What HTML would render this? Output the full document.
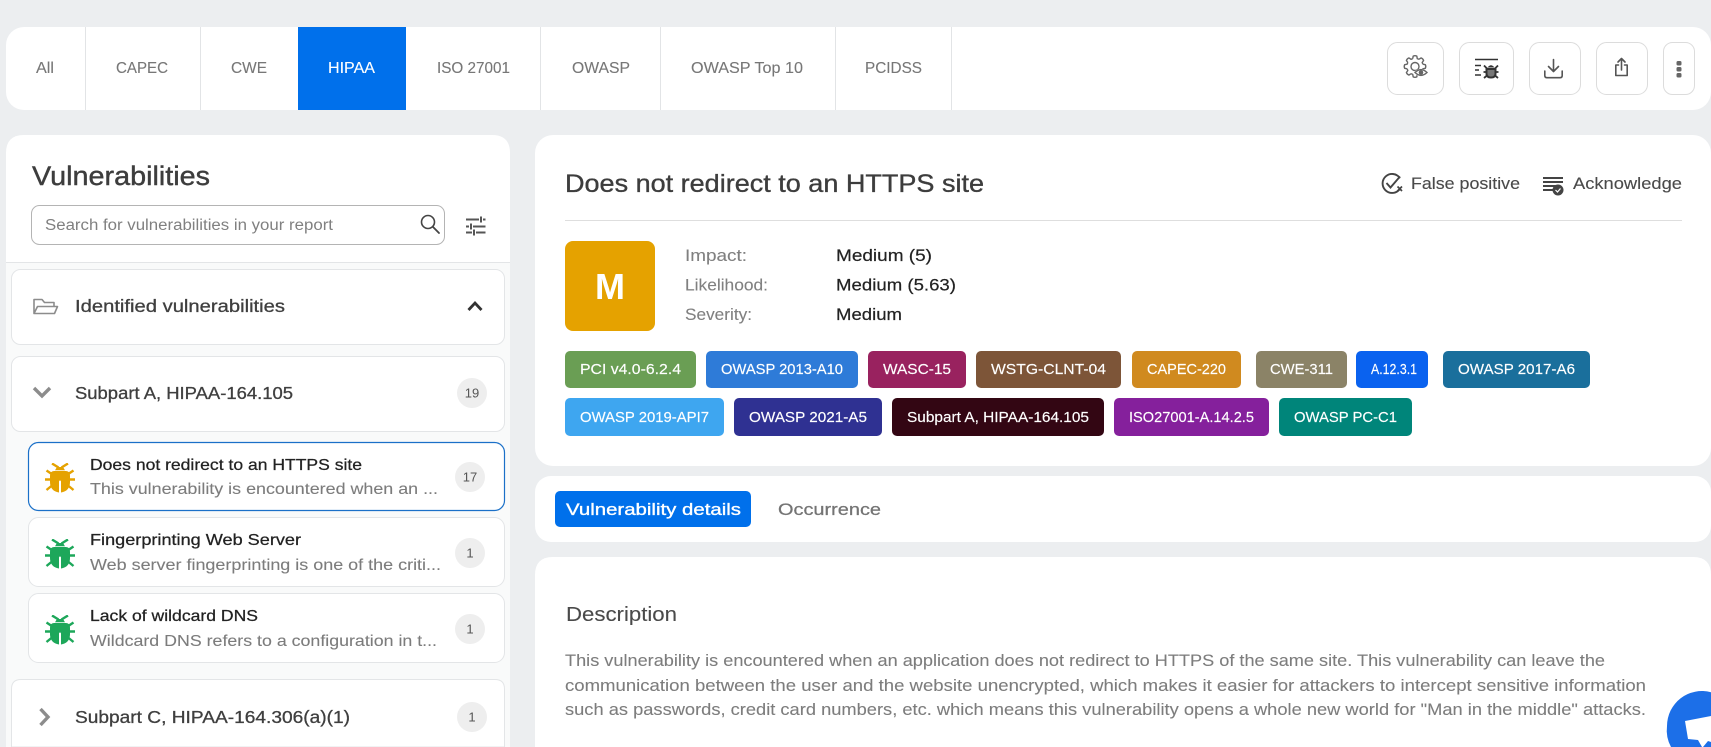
<!DOCTYPE html>
<html lang="en">
<head>
<meta charset="utf-8">
<title>Vulnerabilities</title>
<style>
html,body{margin:0;padding:0;width:1711px;height:747px;overflow:hidden;background:#eceef0}
svg{display:block;position:absolute;left:0;top:0}
text{font-family:"Liberation Sans",sans-serif;}
.tab{font-size:16px;fill:#777;stroke:#777;stroke-width:.12px}
.chip{font-size:15px;fill:#fff;stroke:#fff;stroke-width:.15px}
.lbl{font-size:16.5px;fill:#808080;stroke:#808080;stroke-width:.1px}
.val{font-size:17px;fill:#222;stroke:#222;stroke-width:.2px}
.h3{font-size:17.500px;fill:#3f3f3f;stroke:#3f3f3f;stroke-width:.3px}
.ti{font-size:16px;fill:#222;stroke:#222;stroke-width:.25px}
.de{font-size:16px;fill:#7c7c7c;stroke:#7c7c7c;stroke-width:.1px}
.bn{font-size:13px;fill:#555;text-anchor:middle}
.p{font-size:16.5px;fill:#7d7d7d;stroke:#7d7d7d;stroke-width:.1px}
.ln{fill:none;stroke:#555;stroke-width:1.6;stroke-linecap:round;stroke-linejoin:round}
</style>
</head>
<body>
<svg width="1711" height="747" viewBox="0 0 1711 747" xmlns="http://www.w3.org/2000/svg">
<defs>
<symbol id="bug" viewBox="0 0 30 30">
<path d="M7 .5 13.500 4.500M23 .5 16.500 4.500" fill="none" stroke="currentColor" stroke-width="2.400"/>
<path d="M10 7.200 12 4H18L20 7.200Z" fill="currentColor"/>
<path d="M5 13Q5 8 9 8H21Q25 8 25 13V19Q25 28 16 29.500V18.500Q16 17.500 15 17.500T14 18.500V29.500Q5 28 5 19Z" fill="currentColor"/>
<path d="M1.500 7.500 6 10.500M0 16.500H6M1.500 27 7 22.500M28.500 7.500 24 10.500M30 16.500H24M28.500 27 23 22.500" fill="none" stroke="currentColor" stroke-width="2.400"/>
</symbol>
<path id="tooth" d="M-2.260 -7.880L-1.820 -10.340Q0 -11.200 1.820 -10.340L2.260 -7.880L3.980 -7.180" fill="none" stroke="#666" stroke-width="1.400" stroke-linejoin="round"/>
</defs>

<!-- top tab bar -->
<rect x="6" y="27" width="1705" height="83" rx="18" fill="#fff"/>
<path d="M298 27H406V110H298Z" fill="#0070eb"/>
<g stroke="#e2e4e6" stroke-width="1">
<path d="M85.500 27V110M200.500 27V110M540.500 27V110M660.500 27V110M835.500 27V110M951.500 27V110"/>
</g>
<text class="tab" x="36" y="73" textLength="18" lengthAdjust="spacingAndGlyphs">All</text>
<text class="tab" x="116" y="73" textLength="52" lengthAdjust="spacingAndGlyphs">CAPEC</text>
<text class="tab" x="231" y="73" textLength="36" lengthAdjust="spacingAndGlyphs">CWE</text>
<text class="tab" x="328" y="73" textLength="47" lengthAdjust="spacingAndGlyphs" style="fill:#fff;stroke:#fff">HIPAA</text>
<text class="tab" x="437" y="73" textLength="73" lengthAdjust="spacingAndGlyphs">ISO 27001</text>
<text class="tab" x="572" y="73" textLength="58" lengthAdjust="spacingAndGlyphs">OWASP</text>
<text class="tab" x="691" y="73" textLength="112" lengthAdjust="spacingAndGlyphs">OWASP Top 10</text>
<text class="tab" x="865" y="73" textLength="57" lengthAdjust="spacingAndGlyphs">PCIDSS</text>

<!-- toolbar buttons -->
<g fill="#fff" stroke="#dcdcdc" stroke-width="1">
<rect x="1387.500" y="42.500" width="56" height="52" rx="10"/>
<rect x="1459.500" y="42.500" width="54" height="52" rx="10"/>
<rect x="1529.500" y="42.500" width="51" height="52" rx="10"/>
<rect x="1596.500" y="42.500" width="51" height="52" rx="10"/>
<rect x="1663.500" y="42.500" width="31" height="52" rx="9"/>
</g>
<!-- gear-eye -->
<g transform="translate(1415 66.500)">
<use href="#tooth"/>
<use href="#tooth" transform="rotate(45)"/>
<use href="#tooth" transform="rotate(90)"/>
<use href="#tooth" transform="rotate(135)"/>
<use href="#tooth" transform="rotate(180)"/>
<use href="#tooth" transform="rotate(225)"/>
<use href="#tooth" transform="rotate(270)"/>
<use href="#tooth" transform="rotate(315)"/>
<circle r="4" fill="none" stroke="#666" stroke-width="1.400"/>
</g>
<path d="M1413.500 72.500Q1421 65 1428.500 72.500Q1421 80 1413.500 72.500Z" fill="#fff"/>
<path d="M1415 72.500Q1421 66.800 1427 72.500Q1421 78.200 1415 72.500Z" fill="#fff" stroke="#666" stroke-width="1.400"/>
<circle cx="1421" cy="72.500" r="2.300" fill="#666"/>
<!-- list-bug -->
<path d="M1475 59.500H1498" stroke="#333" stroke-width="1.500"/>
<path d="M1475 65.500H1481M1475 70H1479M1475 75H1481" stroke="#333" stroke-width="1.500"/>
<path d="M1486.500 69H1495.500V73.500Q1495.500 77.500 1491 77.500T1486.500 73.500Z" fill="#777" stroke="#333" stroke-width="2"/>
<path d="M1487.500 67.500Q1491 63 1494.500 67.500Z" fill="#333"/>
<path d="M1484 65.500 1487 68.500M1498 65.500 1495 68.500M1483.500 72H1486M1498.500 72H1496M1484 78 1487 75.500M1498 78 1495 75.500" stroke="#333" stroke-width="1.800"/>
<!-- download -->
<path class="ln" d="M1553.500 59.500V71M1548.500 66.500 1553.500 71.500 1558.500 66.500M1544.800 71V75.500Q1544.800 77.700 1547 77.700H1560Q1562.200 77.700 1562.200 75.500V71"/>
<!-- share -->
<path class="ln" d="M1621.500 59V70M1618 62 1621.500 58.500 1625 62M1618.500 65H1615.800V75.500H1627.200V65H1624.500"/>
<!-- dots -->
<rect x="1676.500" y="61" width="5" height="4.500" rx="1.500" fill="#666"/>
<rect x="1676.500" y="67" width="5" height="4.500" rx="1.500" fill="#666"/>
<rect x="1676.500" y="73" width="5" height="4.500" rx="1.500" fill="#666"/>

<!-- left panel -->
<path d="M6 747V153Q6 135 24 135H492Q510 135 510 153V747Z" fill="#fff"/>
<path d="M6 262H510V747H6Z" fill="#f9fafa"/>
<path d="M6 262.500H510" stroke="#e3e5e7" stroke-width="1"/>
<text x="32" y="185" font-size="26.500" fill="#3d3d3d" stroke="#3d3d3d" stroke-width=".4" textLength="178" lengthAdjust="spacingAndGlyphs">Vulnerabilities</text>
<rect x="31.500" y="205.500" width="413" height="39" rx="8" fill="#fff" stroke="#b4b4b4" stroke-width="1"/>
<text x="45" y="230" font-size="15.500" fill="#808080" textLength="288" lengthAdjust="spacingAndGlyphs">Search for vulnerabilities in your report</text>
<circle cx="428" cy="222" r="6.500" fill="none" stroke="#444" stroke-width="1.600"/>
<path d="M432.800 226.800 439 233" stroke="#444" stroke-width="1.800" stroke-linecap="round"/>
<path d="M466 219.500H479M483 219.500H485.500M481 216.500V222.500M466 226.500H469M473 226.500H485.500M471 223.500V229.500M466 232.500H472M476 232.500H485.500M474 229.500V235.500" stroke="#555" stroke-width="2" fill="none"/>

<!-- identified -->
<rect x="11.500" y="269.500" width="493" height="75" rx="9" fill="#fff" stroke="#e3e5e7"/>
<path class="ln" style="stroke:#8c8c8c" d="M34 313.500V299.500H42L44.500 302.500H54V306M34 313.500L37.500 306.500H57.500L54.500 313.500Z"/>
<text class="h3" x="75" y="312" textLength="210" lengthAdjust="spacingAndGlyphs">Identified vulnerabilities</text>
<path d="M468.500 310 475 303 481.500 310" fill="none" stroke="#333" stroke-width="2.800"/>

<!-- subpart A -->
<rect x="11.500" y="356.500" width="493" height="75" rx="9" fill="#fff" stroke="#e3e5e7"/>
<path d="M34 388 42 396 50 388" fill="none" stroke="#8c8c8c" stroke-width="3.400"/>
<text class="h3" x="75" y="399" textLength="218" lengthAdjust="spacingAndGlyphs">Subpart A, HIPAA-164.105</text>
<circle cx="472" cy="393" r="15" fill="#eeeeee"/>
<text class="bn" x="472" y="397.500">19</text>

<!-- items -->
<rect x="28.500" y="442.500" width="476" height="68" rx="10" fill="#fff" stroke="#1b70c8" stroke-width="1.200"/>
<use href="#bug" x="45" y="463" width="30" height="30" color="#e5a200"/>
<text class="ti" x="90" y="470" textLength="272" lengthAdjust="spacingAndGlyphs">Does not redirect to an HTTPS site</text>
<text class="de" x="90" y="494" textLength="348" lengthAdjust="spacingAndGlyphs">This vulnerability is encountered when an ...</text>
<circle cx="470" cy="477" r="15" fill="#eeeeee"/>
<text class="bn" x="470" y="481.500">17</text>

<rect x="28.500" y="517.500" width="476" height="69" rx="10" fill="#fff" stroke="#e3e5e7"/>
<use href="#bug" x="45" y="539" width="30" height="30" color="#1da75a"/>
<text class="ti" x="90" y="545" textLength="211" lengthAdjust="spacingAndGlyphs">Fingerprinting Web Server</text>
<text class="de" x="90" y="570" textLength="351" lengthAdjust="spacingAndGlyphs">Web server fingerprinting is one of the criti...</text>
<circle cx="470" cy="553" r="15" fill="#eeeeee"/>
<text class="bn" x="470" y="557.500">1</text>

<rect x="28.500" y="593.500" width="476" height="69" rx="10" fill="#fff" stroke="#e3e5e7"/>
<use href="#bug" x="45" y="615" width="30" height="30" color="#1da75a"/>
<text class="ti" x="90" y="621" textLength="168" lengthAdjust="spacingAndGlyphs">Lack of wildcard DNS</text>
<text class="de" x="90" y="646" textLength="347" lengthAdjust="spacingAndGlyphs">Wildcard DNS refers to a configuration in t...</text>
<circle cx="470" cy="629" r="15" fill="#eeeeee"/>
<text class="bn" x="470" y="633.500">1</text>

<!-- subpart C -->
<path d="M11.500 747V689Q11.500 679.500 21 679.500H495Q504.500 679.500 504.500 689V747Z" fill="#fff" stroke="#e3e5e7"/>
<path d="M40.500 709 48 717 40.500 725" fill="none" stroke="#8c8c8c" stroke-width="3.400"/>
<text class="h3" x="75" y="723" textLength="275" lengthAdjust="spacingAndGlyphs">Subpart C, HIPAA-164.306(a)(1)</text>
<circle cx="472" cy="717" r="15" fill="#eeeeee"/>
<text class="bn" x="472" y="721.500">1</text>

<!-- header card -->
<rect x="535" y="135" width="1176" height="331" rx="18" fill="#fff"/>
<text x="565" y="192" font-size="25" fill="#3d3d3d" stroke="#3d3d3d" stroke-width=".35" textLength="419" lengthAdjust="spacingAndGlyphs">Does not redirect to an HTTPS site</text>
<path d="M1399.500 177.500A9.500 9.500 0 1 0 1399 190" fill="none" stroke="#444" stroke-width="1.900" stroke-linecap="round"/>
<path d="M1386.500 183 1390.500 187.500 1400 176.500" fill="none" stroke="#444" stroke-width="1.900"/>
<path d="M1397.500 186.500 1402 191M1402 186.500 1397.500 191" stroke="#444" stroke-width="1.700"/>
<text x="1411" y="189" font-size="16.500" fill="#4a4a4a" stroke="#4a4a4a" stroke-width=".12" textLength="109" lengthAdjust="spacingAndGlyphs">False positive</text>
<path d="M1543 178H1563M1543 182H1563M1543 186H1559M1543 190H1554" stroke="#444" stroke-width="1.900"/>
<circle cx="1558" cy="190" r="5.500" fill="#444"/>
<path d="M1555.500 190 1557.500 192 1560.500 188.500" fill="none" stroke="#fff" stroke-width="1.200"/>
<text x="1573" y="189" font-size="16.500" fill="#4a4a4a" stroke="#4a4a4a" stroke-width=".12" textLength="109" lengthAdjust="spacingAndGlyphs">Acknowledge</text>
<path d="M565 220.500H1682" stroke="#dedede" stroke-width="1"/>

<rect x="565" y="241" width="90" height="90" rx="8" fill="#e5a200"/>
<text x="595" y="299" font-size="36" font-weight="700" fill="#fff" textLength="30" lengthAdjust="spacingAndGlyphs">M</text>

<text class="lbl" x="685" y="261" textLength="62" lengthAdjust="spacingAndGlyphs">Impact:</text>
<text class="lbl" x="685" y="290.500" textLength="83" lengthAdjust="spacingAndGlyphs">Likelihood:</text>
<text class="lbl" x="685" y="320" textLength="67" lengthAdjust="spacingAndGlyphs">Severity:</text>
<text class="val" x="836" y="261" textLength="96" lengthAdjust="spacingAndGlyphs">Medium (5)</text>
<text class="val" x="836" y="290.500" textLength="120" lengthAdjust="spacingAndGlyphs">Medium (5.63)</text>
<text class="val" x="836" y="320" textLength="66" lengthAdjust="spacingAndGlyphs">Medium</text>

<!-- chips -->
<rect x="565" y="351" width="131" height="37" rx="5" fill="#6a9e54"/>
<text class="chip" x="580" y="374" textLength="101" lengthAdjust="spacingAndGlyphs">PCI v4.0-6.2.4</text>
<rect x="706" y="351" width="152" height="37" rx="5" fill="#2e7bd8"/>
<text class="chip" x="721" y="374" textLength="122" lengthAdjust="spacingAndGlyphs">OWASP 2013-A10</text>
<rect x="868" y="351" width="98" height="37" rx="5" fill="#99225f"/>
<text class="chip" x="883" y="374" textLength="68" lengthAdjust="spacingAndGlyphs">WASC-15</text>
<rect x="976" y="351" width="145" height="37" rx="5" fill="#7d5538"/>
<text class="chip" x="991" y="374" textLength="115" lengthAdjust="spacingAndGlyphs">WSTG-CLNT-04</text>
<rect x="1132" y="351" width="109" height="37" rx="5" fill="#d08a1f"/>
<text class="chip" x="1147" y="374" textLength="79" lengthAdjust="spacingAndGlyphs">CAPEC-220</text>
<rect x="1256" y="351" width="91" height="37" rx="5" fill="#8b8367"/>
<text class="chip" x="1270" y="374" textLength="63" lengthAdjust="spacingAndGlyphs">CWE-311</text>
<rect x="1356" y="351" width="72" height="37" rx="5" fill="#0a62ef"/>
<text class="chip" x="1371" y="374" textLength="46" lengthAdjust="spacingAndGlyphs">A.12.3.1</text>
<rect x="1443" y="351" width="147" height="37" rx="5" fill="#1a6f9c"/>
<text class="chip" x="1458" y="374" textLength="117" lengthAdjust="spacingAndGlyphs">OWASP 2017-A6</text>

<rect x="565" y="398" width="159" height="38" rx="5" fill="#3ea6f0"/>
<text class="chip" x="580" y="422" textLength="129" lengthAdjust="spacingAndGlyphs">OWASP 2019-API7</text>
<rect x="734" y="398" width="148" height="38" rx="5" fill="#2f3192"/>
<text class="chip" x="749" y="422" textLength="118" lengthAdjust="spacingAndGlyphs">OWASP 2021-A5</text>
<rect x="892" y="398" width="212" height="38" rx="5" fill="#330613"/>
<text class="chip" x="907" y="422" textLength="182" lengthAdjust="spacingAndGlyphs">Subpart A, HIPAA-164.105</text>
<rect x="1114" y="398" width="155" height="38" rx="5" fill="#85209c"/>
<text class="chip" x="1129" y="422" textLength="125" lengthAdjust="spacingAndGlyphs">ISO27001-A.14.2.5</text>
<rect x="1279" y="398" width="133" height="38" rx="5" fill="#00857a"/>
<text class="chip" x="1294" y="422" textLength="103" lengthAdjust="spacingAndGlyphs">OWASP PC-C1</text>

<!-- tabs card -->
<rect x="535" y="476" width="1176" height="66" rx="16" fill="#fff"/>
<rect x="555" y="491" width="196" height="36" rx="5" fill="#0070eb"/>
<text x="566" y="515" font-size="17" fill="#fff" stroke="#fff" stroke-width=".35" textLength="175" lengthAdjust="spacingAndGlyphs">Vulnerability details</text>
<text x="778" y="515" font-size="17" fill="#747474" stroke="#747474" stroke-width=".25" textLength="103" lengthAdjust="spacingAndGlyphs">Occurrence</text>

<!-- description card -->
<path d="M535 747V575Q535 557 553 557H1693Q1711 557 1711 575V747Z" fill="#fff"/>
<text x="566" y="621" font-size="20" fill="#4a4a4a" stroke="#4a4a4a" stroke-width=".1" textLength="111" lengthAdjust="spacingAndGlyphs">Description</text>
<text class="p" x="565" y="666" textLength="1040" lengthAdjust="spacingAndGlyphs">This vulnerability is encountered when an application does not redirect to HTTPS of the same site. This vulnerability can leave the</text>
<text class="p" x="565" y="691" textLength="1081" lengthAdjust="spacingAndGlyphs">communication between the user and the website unencrypted, which makes it easier for attackers to intercept sensitive information</text>
<text class="p" x="565" y="715" textLength="1081" lengthAdjust="spacingAndGlyphs">such as passwords, credit card numbers, etc. which means this vulnerability opens a whole new world for "Man in the middle" attacks.</text>

<!-- chat bubble -->
<path d="M1711 692.200A35 35 0 0 0 1667 726A35 35 0 0 0 1671 747H1711Z" fill="#1c6fe8"/>
<path d="M1685 721 1711 716V742L1708 741 1703 747H1702L1698 740 1688 739Z" fill="#fff"/>
</svg>
</body>
</html>
